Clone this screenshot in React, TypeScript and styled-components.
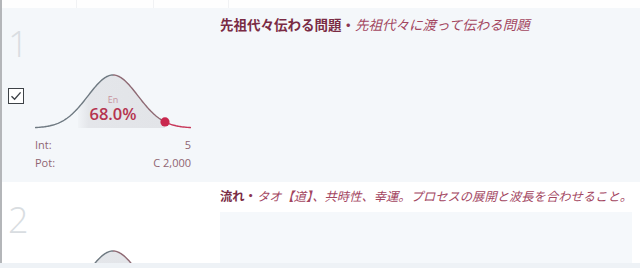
import React from "react";
import styled, { createGlobalStyle } from "styled-components";

const Global = createGlobalStyle`
  html, body { margin: 0; padding: 0; background: #ffffff; }
  body { font-family: "Open Sans", "Noto Sans", "Noto Sans CJK JP", sans-serif; }
  * { box-sizing: border-box; }
`;

const Frame = styled.div`
  width: 640px;
  height: 268px;
  overflow: hidden;
  background: #eef2f6;
  display: flex;
  flex-direction: column;
`;

const Inner = styled.div`
  height: 263px;
  overflow: hidden;
  border-left: 2px solid #b4b6b9;
  background: #ffffff;
  display: flex;
  flex-direction: column;
`;

const HeaderStrip = styled.div`
  height: 8px;
  flex: none;
  display: flex;
  background: #fefefe;
`;

const HeaderCell = styled.div<{ $w: number }>`
  width: ${(p) => p.$w}px;
  border-right: 1px solid #f1f2f4;
`;

const Row = styled.div<{ $selected?: boolean }>`
  flex: none;
  height: 174px;
  margin-bottom: 2px;
  display: flex;
  background: ${(p) => (p.$selected ? "#f4f7fa" : "#ffffff")};
`;

const LeftCol = styled.div`
  width: 216px;
  flex: none;
  padding: 16px 0 0 6px;
  display: flex;
  flex-direction: column;
`;

const Num = styled.div`
  font-family: "Open Sans", sans-serif;
  font-weight: 300;
  font-size: 36px;
  line-height: 40px;
  height: 42px;
  color: #d9dde1;
  padding-left: 0;
`;

const ChartRow = styled.div`
  display: grid;
  grid-template-columns: 25px 160px;
  align-items: start;
  margin-top: 4px;
`;

const Check = styled.div`
  width: 16px;
  height: 16px;
  margin-top: 18px;
  border: 1.5px solid #3d4247;
  background: #ffffff;
  display: flex;
  align-items: center;
  justify-content: center;
`;

const ChartBox = styled.div`
  position: relative;
  width: 160px;
  height: 62px;
`;

const EnLabel = styled.div`
  position: absolute;
  left: 0;
  right: 0;
  top: 25px;
  text-align: center;
  font-size: 9px;
  line-height: 10px;
  color: #c7939f;
`;

const Pct = styled.div`
  position: absolute;
  left: 0;
  right: 0;
  top: 34px;
  text-align: center;
  font-size: 16.5px;
  font-weight: 600;
  line-height: 20px;
  color: #b53450;
`;

const Stats = styled.div`
  margin-left: 27px;
  width: 156px;
  margin-top: 5px;
  display: grid;
  grid-template-columns: 1fr auto;
  row-gap: 2px;
  font-size: 11px;
  line-height: 16px;
  color: #8f6572;
`;

const StatVal = styled.span`
  text-align: right;
`;

const RightCol = styled.div`
  flex: 1;
  min-width: 0;
  padding: 0 8px 0 2px;
  display: flex;
  flex-direction: column;
`;

const Title = styled.div<{ $size: number; $pad: number }>`
  font-family: "Noto Sans CJK JP", "Noto Sans", sans-serif;
  font-size: ${(p) => p.$size}px;
  line-height: 18px;
  padding-top: ${(p) => p.$pad}px;
  white-space: nowrap;
  color: #7e2d46;
`;

const Strong = styled.span`
  font-weight: 700;
  color: #7a2b44;
`;

const Sep = styled.span`
  color: #8c3550;
  font-weight: 700;
`;

const Em = styled.span`
  font-style: italic;
  color: #a3465f;
`;

const Body = styled.div<{ $selected?: boolean }>`
  flex: 1;
  margin-top: 7px;
  background: ${(p) => (p.$selected ? "transparent" : "#f5f8fb")};
`;

function gauss(x: number) {
  return 58 - 53 * Math.exp(-((x - 80) ** 2) / (2 * 25 * 25));
}

function pathBetween(a: number, b: number) {
  const pts: string[] = [];
  for (let x = a; x <= b; x += 1) {
    pts.push(`${x === a ? "M" : "L"}${x.toFixed(1)} ${gauss(x).toFixed(2)}`);
  }
  return pts.join(" ");
}

const Bell: React.FC<{ id: string }> = ({ id }) => {
  const fillPath = `${pathBetween(45, 132)} L132 58 L45 58 Z`;
  return (
    <svg width="160" height="62" viewBox="0 0 160 62">
      <defs>
        <linearGradient id={`g${id}`} x1="0" x2="1" y1="0" y2="0">
          <stop offset="0" stopColor="#e4e6ea" stopOpacity="0.2" />
          <stop offset="0.12" stopColor="#e4e6ea" stopOpacity="1" />
          <stop offset="1" stopColor="#e2e4e8" stopOpacity="1" />
        </linearGradient>
      </defs>
      <path d={fillPath} fill={`url(#g${id})`} />
      <path d={pathBetween(2, 80)} fill="none" stroke="#6f7a82" strokeWidth="1.4" />
      <path d={pathBetween(80, 132)} fill="none" stroke="#8e6a74" strokeWidth="1.4" />
      <path d={pathBetween(132, 158)} fill="none" stroke="#c8385a" strokeWidth="1.4" />
      <circle cx="132" cy={gauss(132)} r="4.6" fill="#c9284e" />
    </svg>
  );
};

const CheckIcon = () => (
  <svg width="12" height="12" viewBox="0 0 12 12">
    <path d="M1.5 6.2 L4.6 9.2 L10.6 2.4" fill="none" stroke="#3d4247" strokeWidth="1.4" />
  </svg>
);

type Item = {
  n: number;
  selected: boolean;
  strong: string;
  em: string;
  size: number;
  pad: number;
};

const items: Item[] = [
  { n: 1, selected: true, strong: "先祖代々伝わる問題", em: "先祖代々に渡って伝わる問題", size: 13.5, pad: 7 },
  {
    n: 2,
    selected: false,
    strong: "流れ",
    em: "タオ【道】、共時性、幸運。プロセスの展開と波長を合わせること。",
    size: 12.3,
    pad: 3,
  },
];

export default function App() {
  return (
    <>
      <Global />
      <Frame>
        <Inner>
          <HeaderStrip>
            <HeaderCell $w={75} />
            <HeaderCell $w={77} />
            <HeaderCell $w={75} />
          </HeaderStrip>
          {items.map((it) => (
            <Row key={it.n} $selected={it.selected}>
              <LeftCol>
                <Num>{it.n}</Num>
                <ChartRow>
                  <Check>{it.selected && <CheckIcon />}</Check>
                  <ChartBox>
                    <Bell id={String(it.n)} />
                    <EnLabel>En</EnLabel>
                    <Pct>68.0%</Pct>
                  </ChartBox>
                </ChartRow>
                <Stats>
                  <span>Int:</span>
                  <StatVal>5</StatVal>
                  <span>Pot:</span>
                  <StatVal>C 2,000</StatVal>
                </Stats>
              </LeftCol>
              <RightCol>
                <Title $size={it.size} $pad={it.pad}>
                  <Strong>{it.strong}</Strong>
                  <Sep>・</Sep>
                  <Em>{it.em}</Em>
                </Title>
                <Body $selected={it.selected} />
              </RightCol>
            </Row>
          ))}
        </Inner>
      </Frame>
    </>
  );
}
